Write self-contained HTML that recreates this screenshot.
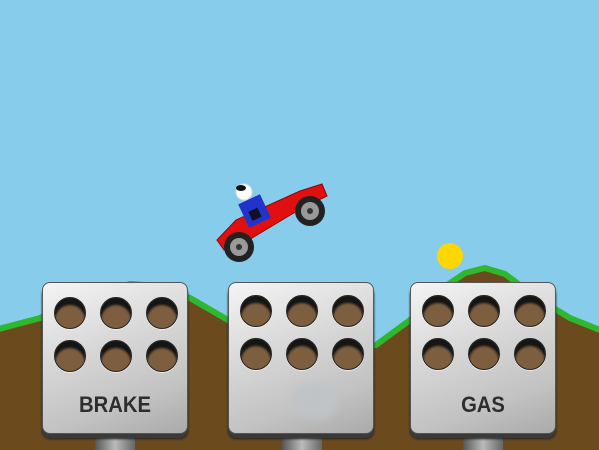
<!DOCTYPE html>
<html><head><style>
body{margin:0;width:599px;height:450px;overflow:hidden;background:#87cdeb;position:relative;font-family:"Liberation Sans",sans-serif}
.p{position:absolute;top:282px;width:146px;height:152px;border-radius:8px;background:linear-gradient(160deg,#f4f4f4 0%,#d8d8d8 40%,#c2c2c2 75%,#aaa 100%);box-shadow:0 4px 0 #3a3a3a,0 5px 2px #222;border:1px solid #555;box-sizing:border-box}
.h{position:absolute;width:32px;height:32px;border-radius:50%;background:#7d5e3f;box-shadow:inset 0 7px 2px #151515,0 1px 0 #f0f0f0;border:1px solid #222;box-sizing:border-box}
.s{position:absolute;top:434px;width:40px;height:16px;background:linear-gradient(90deg,#555,#bbb 50%,#666)}
.t{position:absolute;left:0;right:0;top:109px;text-align:center;font-weight:bold;font-size:22px;color:#2e2e2e;letter-spacing:0px;transform:scaleX(0.92)}
</style></head><body>
<svg width="599" height="450" style="position:absolute;left:0;top:0">
<path d="M-5 330 L40 318 L80 300 L130 284 L160 286 L190 298 L228 320 L270 345 L330 352 L376 345 L410 320 L440 290 L465 273 L485 268 L505 274 L540 300 L570 318 L605 332 L605 455 L-5 455Z" fill="#6b4a1e"/>
<path d="M-5 330 L40 318 L80 300 L130 284 L160 286 L190 298 L228 320 L270 345 L330 352 L376 345 L410 320 L440 290 L465 273 L485 268 L505 274 L540 300 L570 318 L605 332" fill="none" stroke="#2eb82e" stroke-width="6"/>
<circle cx="450" cy="256" r="13" fill="#ffd700"/>
<polygon points="217,240 236,220 300,191 322,184 327,196 302,208 252,238 224,250" fill="#e01010" stroke="#900" stroke-width="1"/>
<g transform="rotate(-25 255 212)"><rect x="243" y="198" width="24" height="26" fill="#2233cc"/><rect x="249" y="209" width="10" height="10" fill="#112"/></g>
<circle cx="244" cy="192" r="8" fill="#fff" stroke="#ddd"/><ellipse cx="241" cy="188" rx="5" ry="3" fill="#111"/>
<circle cx="239" cy="247" r="15" fill="#222"/><circle cx="239" cy="247" r="9" fill="#999"/><circle cx="239" cy="247" r="3" fill="#333"/>
<circle cx="310" cy="211" r="15" fill="#222"/><circle cx="310" cy="211" r="9" fill="#999"/><circle cx="310" cy="211" r="3" fill="#333"/>
</svg>
<div class="s" style="left:95px"></div><div class="s" style="left:282px"></div><div class="s" style="left:463px"></div>
<div class="p" style="left:42px">
<div class="h" style="left:11px;top:14px"></div><div class="h" style="left:57px;top:14px"></div><div class="h" style="left:103px;top:14px"></div>
<div class="h" style="left:11px;top:57px"></div><div class="h" style="left:57px;top:57px"></div><div class="h" style="left:103px;top:57px"></div>
<div class="t">BRAKE</div></div>
<div class="p" style="left:228px">
<div class="h" style="left:11px;top:12px"></div><div class="h" style="left:57px;top:12px"></div><div class="h" style="left:103px;top:12px"></div>
<div class="h" style="left:11px;top:55px"></div><div class="h" style="left:57px;top:55px"></div><div class="h" style="left:103px;top:55px"></div>
<div style="position:absolute;left:62px;top:100px;width:46px;height:36px;border-radius:18px;background:#bfc3c6;filter:blur(4px)"></div></div>
<div class="p" style="left:410px">
<div class="h" style="left:11px;top:12px"></div><div class="h" style="left:57px;top:12px"></div><div class="h" style="left:103px;top:12px"></div>
<div class="h" style="left:11px;top:55px"></div><div class="h" style="left:57px;top:55px"></div><div class="h" style="left:103px;top:55px"></div>
<div class="t">GAS</div></div>
</body></html>
